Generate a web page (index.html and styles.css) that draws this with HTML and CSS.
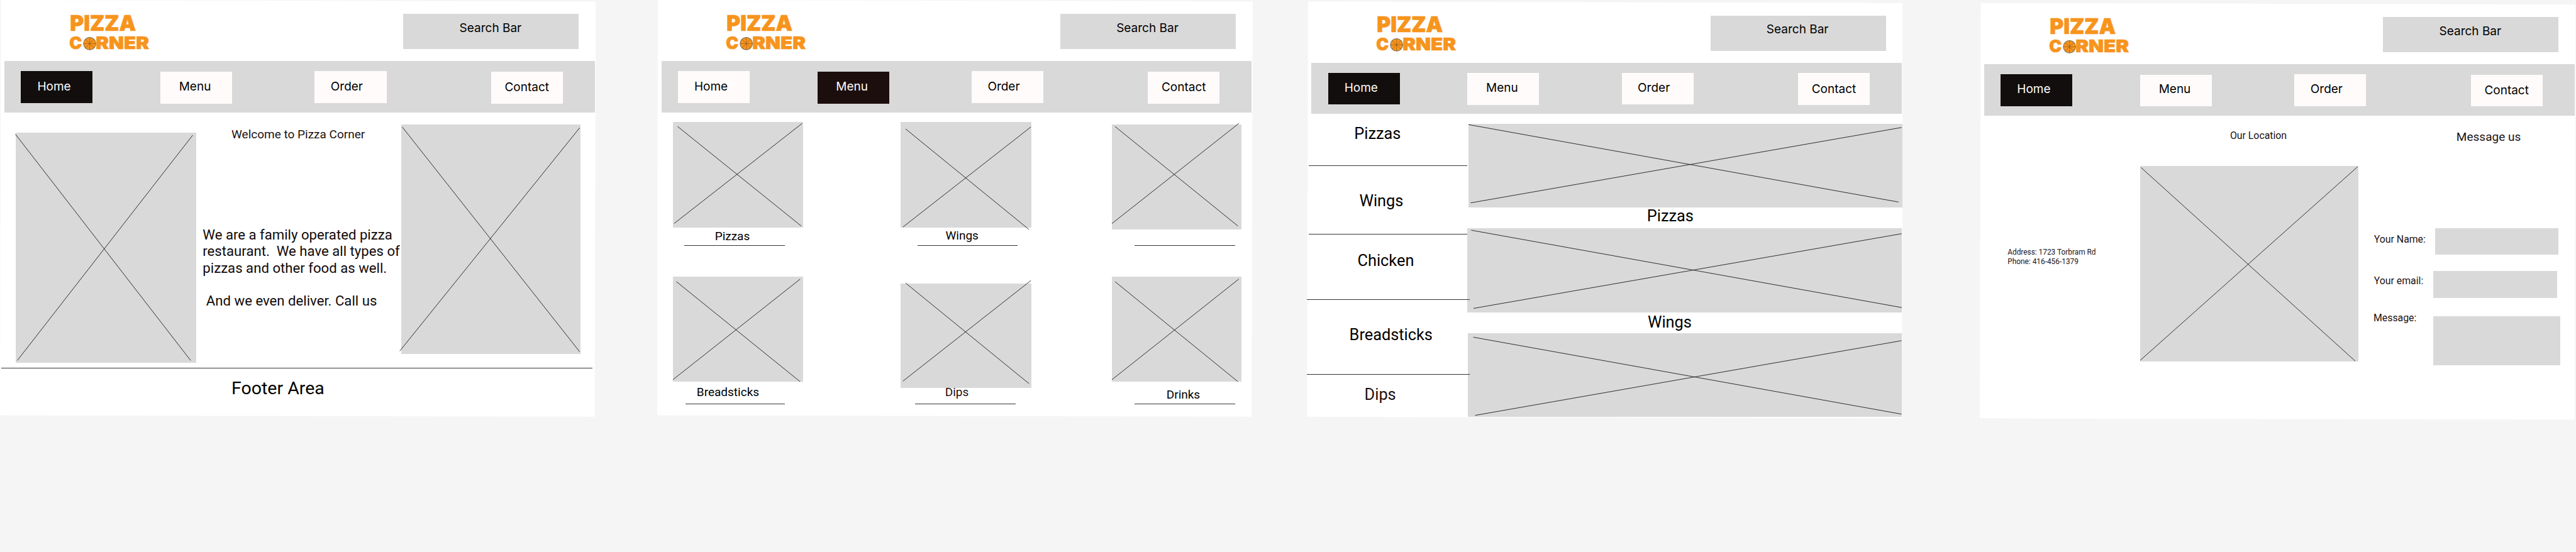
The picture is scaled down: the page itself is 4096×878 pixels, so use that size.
FILE: index.html
```html
<!DOCTYPE html>
<html lang="en">
<head>
<meta charset="utf-8">
<title>Pizza Corner wireframes</title>
<link rel="stylesheet" href="styles.css">
</head>
<body>
<svg class="defs" aria-hidden="true">
  <symbol id="logo" viewBox="135 25 170 80">
    <text class="logo-word logo-top" x="140.4" y="61.8" textLength="132.4" lengthAdjust="spacingAndGlyphs">PIZZA</text>
    <text class="logo-word logo-bottom" x="139" y="98.1" textLength="25.2" lengthAdjust="spacingAndGlyphs">C</text>
    <text class="logo-word logo-bottom" x="192.2" y="98.1" textLength="107" lengthAdjust="spacingAndGlyphs">RNER</text>
    <circle cx="180" cy="87.3" r="12.4" fill="#f7941d" stroke="#7d6a55" stroke-width="1.3"/>
    <path d="M180 75v24.6M167.6 87.3h24.8M171.3 78.6l17.4 17.4M188.7 78.6l-17.4 17.4" stroke="#7a4d1c" stroke-width="0.7"/>
  </symbol>
</svg>

<section class="board">
  <header class="head">
    <svg class="logo"><use href="#logo"/></svg>
    <div class="search">Search Bar</div>
  </header>
  <nav class="nav">
    <a class="tab home current">Home</a><a class="tab menu">Menu</a><a class="tab order">Order</a><a class="tab contact">Contact</a>
  </nav>
  <main class="welcome">
    <figure class="pic pic-left"><svg viewBox="0 0 362 462"><path d="M-.7 3L351.3 457.7M355.4 5L3.1 457.7"/></svg></figure>
    <div class="intro">
      <h1 class="t24 intro-title">Welcome to Pizza Corner</h1>
      <p class="intro-text">We are a family operated pizza
restaurant.&nbsp; We have all types of
pizzas and other food as well.

&nbsp;And we even deliver. Call us</p>
    </div>
    <figure class="pic pic-right"><svg viewBox="0 0 361 461"><path d="M2 5L358.4 456.7M358.4 6.5L-3 455"/></svg></figure>
  </main>
  <div class="rule footer-rule"></div>
  <footer class="footer">Footer Area</footer>
</section>

<section class="board board-menu">
  <header class="head">
    <svg class="logo"><use href="#logo"/></svg>
    <div class="search">Search Bar</div>
  </header>
  <nav class="nav">
    <a class="tab home">Home</a><a class="tab menu current">Menu</a><a class="tab order">Order</a><a class="tab contact">Contact</a>
  </nav>
  <main class="cards">
    <article class="card pizzas">
      <figure class="pic"><svg viewBox="0 0 261 212"><path d="M9.3 9L257.7 209M259.3 3L2.3 204"/></svg></figure>
      <h2 class="t24">Pizzas</h2><div class="rule"></div>
    </article>
    <article class="card wings">
      <figure class="pic"><svg viewBox="0 0 263 212"><path d="M10.1 14L257.8 216M261.6 10L4.7 211"/></svg></figure>
      <h2 class="t24">Wings</h2><div class="rule"></div>
    </article>
    <article class="card blank">
      <figure class="pic"><svg viewBox="0 0 261 211"><path d="M6.2 4L253.1 204M254.7 -2L0 199"/></svg></figure>
      <div class="rule"></div>
    </article>
    <article class="card breadsticks">
      <figure class="pic"><svg viewBox="0 0 261 211"><path d="M6.9 10L255.4 211M255.4 5L0 207"/></svg></figure>
      <h2 class="t24">Breadsticks</h2><div class="rule"></div>
    </article>
    <article class="card dips">
      <figure class="pic"><svg viewBox="0 0 263 210"><path d="M10.1 -1L257.8 201M261.6 -6L4.7 196"/></svg></figure>
      <h2 class="t24">Dips</h2><div class="rule"></div>
    </article>
    <article class="card drinks">
      <figure class="pic"><svg viewBox="0 0 261 211"><path d="M6.2 10L253.1 211M254.7 5L0 207"/></svg></figure>
      <h2 class="t24">Drinks</h2><div class="rule"></div>
    </article>
  </main>
</section>

<section class="board board-order">
  <header class="head">
    <svg class="logo"><use href="#logo"/></svg>
    <div class="search">Search Bar</div>
  </header>
  <nav class="nav">
    <a class="tab home current">Home</a><a class="tab menu">Menu</a><a class="tab order">Order</a><a class="tab contact">Contact</a>
  </nav>
  <main class="order-body">
    <aside class="side">
      <div class="t32 side-pizzas">Pizzas</div><div class="rule r1"></div>
      <div class="t32 side-wings">Wings</div><div class="rule r2"></div>
      <div class="t32 side-chicken">Chicken</div><div class="rule r3"></div>
      <div class="t32 side-bread">Breadsticks</div><div class="rule r4"></div>
      <div class="t32 side-dips">Dips</div>
    </aside>
    <div class="shots">
      <figure class="pic shot1"><svg viewBox="0 0 871.9 168"><path d="M0 1.5L863.3 157M869.6 7.3L4.3 158.7"/></svg></figure>
      <div class="t32 shot-pizzas">Pizzas</div>
      <figure class="pic shot2"><svg viewBox="0 0 872.3 168"><path d="M7.9 4L872.3 159.3M872.3 11L12.6 161"/></svg></figure>
      <div class="t32 shot-wings">Wings</div>
      <figure class="pic shot3"><svg viewBox="0 0 870.6 168"><path d="M10.9 8L870.6 162.5M870.6 15L14.6 165"/></svg></figure>
    </div>
  </main>
</section>

<section class="board board-contact">
  <header class="head">
    <svg class="logo"><use href="#logo"/></svg>
    <div class="search">Search Bar</div>
  </header>
  <nav class="nav">
    <a class="tab home current">Home</a><a class="tab menu">Menu</a><a class="tab order">Order</a><a class="tab contact">Contact</a>
  </nav>
  <main class="contact-body">
    <address class="address">Address: 1723 Torbram Rd<br>Phone: 416-456-1379</address>
    <div class="place">
      <h2 class="t20 place-title">Our Location</h2>
      <figure class="pic map"><svg viewBox="0 0 438.3 392"><path d="M1.6 3L432 392M436.7 1.5L0 390.5"/></svg></figure>
    </div>
    <form class="form">
      <h2 class="t24 form-title">Message us</h2>
      <div class="row row-name"><label class="t20">Your Name:</label><div class="field"></div></div>
      <div class="row row-email"><label class="t20">Your email:</label><div class="field"></div></div>
      <div class="row row-message"><label class="t20">Message:</label><div class="field"></div></div>
    </form>
  </main>
</section>
</body>
</html>
```
FILE: styles.css
```css
/* 1rem = 10 design units; 5172 units span the 4096px window */
html { font-size: 7.9196px; background: #f5f5f5; }
* { box-sizing: border-box; }
body {
  margin: 0;
  display: flex;
  align-items: flex-start;
  width: 517.2rem;
  overflow: hidden;
  color: #000;
  font-family: Roboto, "Liberation Sans", sans-serif;
}
h1, h2, p, figure, address { margin: 0; font-weight: 400; font-style: normal; }
.defs { display: none; }

/* Artboards */
.board { position: relative; flex: none; width: 119.6rem; height: 84rem; }
.board::before {
  content: "";
  position: absolute;
  inset: 0;
  z-index: -1;
  background: #fff;
  clip-path: polygon(0.2rem 0, 119.6rem 0.3rem, 119.4rem 83.7rem, 0 83.4rem);
}
.board-menu { margin-left: 12.3rem; }
.board-order { margin: 0.3rem 0 0 10.93rem; }
.board-contact { margin: 0.6rem 0 0 15.47rem; }

/* Header */
.head { display: flex; align-items: flex-start; height: 12.3rem; }
.logo { flex: none; width: 17rem; height: 8rem; margin: 2.5rem 0 0 13.5rem; }
.logo-word { font-family: Inter, sans-serif; font-weight: 900; fill: #f7941d; stroke: #f7941d; stroke-width: 0.9; }
.logo-top { font-size: 43.4px; }
.logo-bottom { font-size: 35px; }
.search {
  width: 35.2rem;
  height: 7.1rem;
  margin: 2.8rem 0 0 50.5rem;
  padding: 1.5rem 0 0 11.25rem;
  background: #d9d9d9;
  font: 2.4rem/2.8rem Inter, sans-serif;
  white-space: nowrap;
}

/* Navigation */
.nav {
  display: flex;
  align-items: flex-start;
  width: 118.5rem;
  height: 10.3rem;
  margin-left: 0.9rem;
  background: #d9d9d9;
}
.tab {
  flex: none;
  width: 14.4rem;
  height: 6.4rem;
  background: #fffbfb;
  font: 2.4rem/2.8rem Inter, sans-serif;
}
.home { margin: 2rem 0 0 3.3rem; padding: 1.7rem 0 0 3.3rem; }
.menu { margin: 2.1rem 0 0 13.6rem; padding: 1.6rem 0 0 3.75rem; }
.order { margin: 2rem 0 0 16.6rem; padding: 1.7rem 0 0 3.2rem; }
.contact { margin: 2.1rem 0 0 21rem; padding: 1.78rem 0 0 2.73rem; }
.home.current { background: #120e0d; color: #fffbfb; }
.menu.current { background: #1d0e0e; color: #fffbfb; }

/* Shared pieces */
.pic { flex: none; background: #d9d9d9; }
.pic svg { display: block; width: 100%; height: 100%; overflow: visible; }
.pic path { fill: none; stroke: #000; stroke-width: 1; }
.rule { flex: none; height: 1px; margin-bottom: 0.074rem; background: #353535; }
.t20 { font-size: 2rem; line-height: 2.4rem; white-space: nowrap; }
.t24 { font-size: 2.4rem; line-height: 2.8rem; white-space: nowrap; }
.t32 { font-size: 3.2rem; line-height: 3.8rem; white-space: nowrap; }

/* Home */
.welcome { display: flex; align-items: flex-start; height: 51.3rem; }
.pic-left { width: 36.2rem; height: 46.2rem; margin: 4.1rem 0 0 3.21rem; }
.pic-right { width: 36.1rem; height: 46.1rem; margin-top: 2.4rem; }
.intro { flex: none; width: 39.8rem; margin-left: 1.29rem; padding-top: 3.08rem; }
.intro-title { margin-left: 5.77rem; color: #1c1212; }
.intro-text { margin-top: 17.02rem; font-size: 2.8rem; line-height: 3.3rem; white-space: pre; color: #120a0a; }
.footer-rule { width: 118.7rem; margin-left: 0.2rem; }
.footer { margin: 1.84rem 0 0 46.47rem; font-size: 3.6rem; line-height: 4.2rem; }

/* Menu */
.cards {
  display: grid;
  grid-template: 31.4rem 29.4rem / 45.68rem 42.44rem 27rem;
  padding-left: 3.19rem;
}
.card { display: flex; flex-direction: column; align-items: flex-start; }
.card .pic { width: 26.1rem; height: 21.1rem; margin-top: 1.5rem; }
.card .rule { width: 20.2rem; }
.pizzas .pic { height: 21.2rem; margin-top: 1.9rem; }
.pizzas h2 { margin: 0.45rem 0 0.35rem 8.44rem; }
.pizzas .rule { margin-left: 2.31rem; }
.wings .pic { width: 26.3rem; height: 21.2rem; margin-top: 1.9rem; }
.wings h2 { margin: 0.28rem 0 0.52rem 9.07rem; }
.wings .rule { margin-left: 3.4rem; }
.blank .pic { margin-top: 2.4rem; }
.blank .rule { margin: 3.2rem 0 0 4.56rem; }
.breadsticks h2 { margin: 0.75rem 0 0.95rem 4.8rem; }
.breadsticks .rule { width: 20rem; margin-left: 2.55rem; }
.dips .pic { width: 26.3rem; height: 21rem; margin-top: 2.9rem; }
.dips h2 { margin: -0.55rem 0 0.95rem 8.98rem; color: #1f0f0f; }
.dips .rule { margin-left: 3.01rem; }
.drinks h2 { margin: 1.33rem 0 0.37rem 10.99rem; }
.drinks .rule { margin-left: 4.56rem; }

/* Order */
.order-body { display: flex; align-items: flex-start; }
.side { position: relative; z-index: 1; flex: none; display: flex; flex-direction: column; align-items: flex-start; width: 32.17rem; }
.side-pizzas { margin: 2.01rem 0 4.49rem 9.47rem; }
.side-wings { margin: 5.01rem 0 4.79rem 10.5rem; }
.side-chicken { margin: 3.21rem 0 5.89rem 10.13rem; }
.side-bread { margin: 5.01rem 0 6.09rem 8.5rem; }
.side-dips { margin: 1.91rem 0 0 11.53rem; color: #1f0f0f; }
.r1, .r2 { width: 31.8rem; margin-left: 0.37rem; }
.r3, .r4 { width: 32.68rem; margin-left: -0.03rem; }
.shots { display: flex; flex-direction: column; align-items: flex-start; }
.shots .pic { height: 16.8rem; }
.shot1 { width: 87.19rem; margin: 2rem 0 0 0.2rem; }
.shot-pizzas { margin: -0.29rem 0 0.69rem 36.08rem; }
.shot2 { width: 87.23rem; }
.shot-wings { margin: 0.01rem 0 0.39rem 36.23rem; }
.shot3 { width: 87.06rem; margin-left: 0.17rem; }

/* Contact */
.contact-body { display: flex; align-items: flex-start; color: #1c1212; }
.address { flex: none; width: 32.2rem; padding: 26.61rem 0 0 5.59rem; font-size: 1.5rem; line-height: 1.78rem; }
.place { flex: none; width: 43.83rem; }
.place-title { margin: 2.82rem 0 4.98rem 18.05rem; }
.map { height: 39.2rem; }
.form { flex: none; width: 43.5rem; }
.form-title { margin: 2.91rem 0 0 19.67rem; }
.row { display: flex; align-items: flex-start; margin-left: 3.12rem; }
.row label { flex: none; }
.field { width: 24.8rem; height: 5.4rem; background: #d9d9d9; }
.row-name { margin-top: 16.89rem; }
.row-name label { width: 12.25rem; margin-top: 1.02rem; }
.row-email { margin-top: 3.2rem; }
.row-email label { width: 11.95rem; margin-top: 0.82rem; }
.row-message { margin: 2.82rem 0 0 3.02rem; }
.row-message label { width: 11.95rem; }
.row-message .field { width: 25.6rem; height: 9.9rem; margin-top: 0.88rem; }
```
